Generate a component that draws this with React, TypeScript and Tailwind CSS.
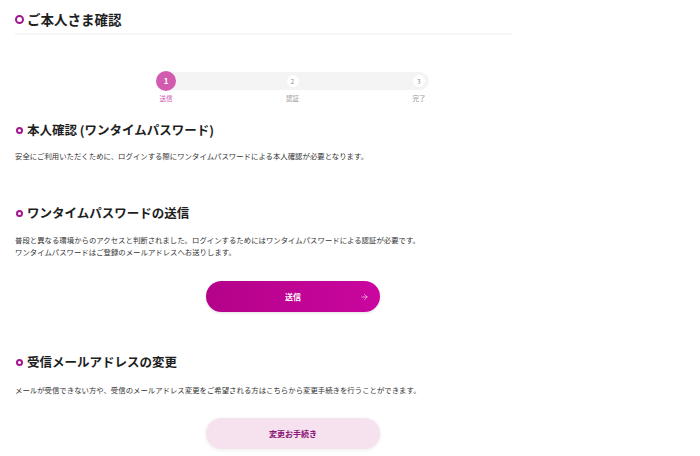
import { ArrowRight } from "lucide-react"

function SectionHeading({ children }: { children: React.ReactNode }) {
    return (
        <h2 className="flex items-center gap-[4px] pl-[1px] text-[12.5px] leading-[16px] font-bold text-[#1e1e1e]">
            <span className="w-[7px] h-[7px] rounded-full border-2 border-[#a3168e] shrink-0" />
            {children}
        </h2>
    )
}

const steps = [
    { num: "1", label: "送信", active: true },
    { num: "2", label: "認証", active: false },
    { num: "3", label: "完了", active: false },
]

function Stepper() {
    return (
        <div className="ml-[141px] w-[273px] mt-[37px]">
            <div className="h-[18px] rounded-full bg-[#f4f4f4] flex justify-between items-center">
                {steps.map((s) => (
                    <div key={s.num} className="w-[20px] flex justify-center">
                        {s.active ? (
                            <div className="w-[20px] h-[20px] rounded-full bg-[#d25bb0] text-white text-[8px] font-bold flex items-center justify-center">
                                {s.num}
                            </div>
                        ) : (
                            <div className="w-[12px] h-[12px] rounded-full bg-white text-[#888] text-[6px] flex items-center justify-center">
                                {s.num}
                            </div>
                        )}
                    </div>
                ))}
            </div>
            <div className="flex justify-between mt-[3px]">
                {steps.map((s) => (
                    <div
                        key={s.num}
                        className={`w-[20px] text-center text-[6.5px] leading-[10px] whitespace-nowrap ${s.active ? "text-[#d25bb0]" : "text-[#999]"}`}
                    >
                        {s.label}
                    </div>
                ))}
            </div>
        </div>
    )
}

export default function App() {
    return (
        <div className="w-[700px] h-[456px] bg-white overflow-hidden font-['Noto_Sans_CJK_JP',sans-serif]">
            <div className="pl-[15px] w-[571px]">
                <div className="w-[497px] pt-[10px] pb-[5px] border-b-2 border-[#f5f5f5]">
                    <h1 className="flex items-center gap-[3px] text-[13.5px] leading-[18px] font-bold text-[#1e1e1e]">
                        <span className="w-[9px] h-[9px] rounded-full border-[2.5px] border-[#a3168e] shrink-0" />
                        ご本人さま確認
                    </h1>
                </div>

                <Stepper />

                <section className="mt-[19px]">
                    <SectionHeading>本人確認 (ワンタイムパスワード)</SectionHeading>
                    <p className="mt-[12px] text-[7.4px] leading-[12px] text-[#333]">
                        安全にご利用いただくために、ログインする際にワンタイムパスワードによる本人確認が必要となります。
                    </p>
                </section>

                <section className="mt-[43px]">
                    <SectionHeading>ワンタイムパスワードの送信</SectionHeading>
                    <p className="mt-[13px] text-[7.4px] leading-[12px] text-[#333]">
                        普段と異なる環境からのアクセスと判断されました。ログインするためにはワンタイムパスワードによる認証が必要です。
                        <br />
                        ワンタイムパスワードはご登録のメールアドレスへお送りします。
                    </p>
                    <button className="relative mx-auto mt-[23px] flex w-[174px] h-[31px] items-center justify-center rounded-full bg-gradient-to-r from-[#b4028a] to-[#ca069e] text-white text-[8px] font-bold shadow-[0_1px_3px_rgba(0,0,0,0.12)]">
                        送信
                        <ArrowRight className="absolute right-[11px] top-1/2 -translate-y-1/2" size={9} strokeWidth={1.5} />
                    </button>
                </section>

                <section className="mt-[42px]">
                    <SectionHeading>受信メールアドレスの変更</SectionHeading>
                    <p className="mt-[14px] text-[7.4px] leading-[12px] text-[#333]">
                        メールが受信できない方や、受信のメールアドレス変更をご希望される方はこちらから変更手続きを行うことができます。
                    </p>
                    <button className="mx-auto mt-[22px] flex w-[174px] h-[31px] items-center justify-center rounded-full bg-[#f6e1ef] text-[#8b1475] text-[8px] font-bold shadow-[0_1px_4px_rgba(0,0,0,0.08)]">
                        変更お手続き
                    </button>
                </section>
            </div>
        </div>
    )
}
